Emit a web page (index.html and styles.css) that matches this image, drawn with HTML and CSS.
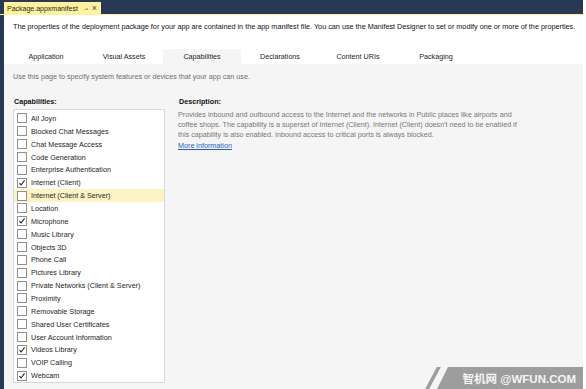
FILE: index.html
```html
<!DOCTYPE html>
<html lang="en">

<head>
    <meta charset="UTF-8">
    <title>Package.appxmanifest</title>
    <link rel="stylesheet" href="styles.css">
</head>

<body>
    <div class="window">
        <div class="titlebar">
            <div class="doc-tab">
                <span>Package.appxmanifest</span>
                <span class="pin">&#8888;</span>
                <span class="close">&#215;</span>
            </div>
        </div>
        <div class="accent"></div>
        <div class="frame">
            <div class="content">
                <p class="intro">The properties of the deployment package for your app are contained in the app manifest file. You can use the Manifest Designer to set or modify one or more of the properties.</p>
                <div class="tabs">
                    <div class="tab">Application</div>
                    <div class="tab">Visual Assets</div>
                    <div class="tab active">Capabilities</div>
                    <div class="tab">Declarations</div>
                    <div class="tab">Content URIs</div>
                    <div class="tab">Packaging</div>
                </div>
                <div class="panel">
                    <p class="hint">Use this page to specify system features or devices that your app can use.</p>
                    <div class="columns">
                        <div class="caps">
                            <h2>Capabilities:</h2>
                            <ul class="list">
                                <li><span class="box"></span>All Joyn</li>
                                <li><span class="box"></span>Blocked Chat Messages</li>
                                <li><span class="box"></span>Chat Message Access</li>
                                <li><span class="box"></span>Code Generation</li>
                                <li><span class="box"></span>Enterprise Authentication</li>
                                <li><span class="box checked"><svg viewBox="0 0 9 9"><path d="M1.6 4.6l1.9 2.1L7.4 1.6" /></svg></span>Internet (Client)</li>
                                <li class="selected"><span class="box"></span>Internet (Client &amp; Server)</li>
                                <li><span class="box"></span>Location</li>
                                <li><span class="box checked"><svg viewBox="0 0 9 9"><path d="M1.6 4.6l1.9 2.1L7.4 1.6" /></svg></span>Microphone</li>
                                <li><span class="box"></span>Music Library</li>
                                <li><span class="box"></span>Objects 3D</li>
                                <li><span class="box"></span>Phone Call</li>
                                <li><span class="box"></span>Pictures Library</li>
                                <li><span class="box"></span>Private Networks (Client &amp; Server)</li>
                                <li><span class="box"></span>Proximity</li>
                                <li><span class="box"></span>Removable Storage</li>
                                <li><span class="box"></span>Shared User Certificates</li>
                                <li><span class="box"></span>User Account Information</li>
                                <li><span class="box checked"><svg viewBox="0 0 9 9"><path d="M1.6 4.6l1.9 2.1L7.4 1.6" /></svg></span>Videos Library</li>
                                <li><span class="box"></span>VOIP Calling</li>
                                <li><span class="box checked"><svg viewBox="0 0 9 9"><path d="M1.6 4.6l1.9 2.1L7.4 1.6" /></svg></span>Webcam</li>
                            </ul>
                        </div>
                        <div class="desc">
                            <h2>Description:</h2>
                            <p>Provides inbound and outbound access to the Internet and the networks in Public places like airports and coffee shops. The capability is a superset of Internet (Client). Internet (Client) doesn't need to be enabled if this capability is also enabled. Inbound access to critical ports is always blocked.</p>
                            <a href="#">More information</a>
                        </div>
                    </div>
                </div>
            </div>
        </div>
    </div>
    <div class="watermark">
        <span class="slash"></span>
        <span class="band">智机网 @WFUN.COM</span>
    </div>
</body>

</html>
```
FILE: styles.css
```css
:root {
  --navy: #293955;
  --tab-yellow: #fff29d;
  --panel: #f5f5f5;
}
body {
  margin: 0;
  padding: 0;
  background: #fff;
  font-family: "Liberation Sans", "Noto Sans CJK SC", sans-serif;
  font-size: 7.2px;
  color: #1e1e1e;
  overflow: hidden;
}
.window {
  width: 583px;
  height: 389px;
  display: flex;
  flex-direction: column;
}
.titlebar {
  height: 14px;
  background: var(--navy);
  display: flex;
  align-items: flex-end;
  padding-left: 4px;
}
.doc-tab {
  height: 12px;
  box-sizing: border-box;
  background: var(--tab-yellow);
  display: flex;
  align-items: center;
  padding: 0 4px 0 3px;
  color: #1e1e1e;
  font-size: 7px;
  white-space: nowrap;
}
.doc-tab .pin {
  margin-left: 5px;
  font-size: 6px;
  color: #555;
}
.doc-tab .close {
  margin-left: 4px;
  font-size: 9px;
  line-height: 9px;
  color: #444;
}
.accent {
  height: 1px;
  background: var(--tab-yellow);
}
.frame {
  flex: 1;
  display: flex;
  border-left: 4px solid var(--navy);
  min-height: 0;
}
.content {
  flex: 1;
  display: flex;
  flex-direction: column;
}
.intro {
  margin: 8px 0 0 9px;
  line-height: 8px;
  font-size: 7.25px;
  color: #111;
  white-space: nowrap;
}
.tabs {
  display: flex;
  margin-top: 18px;
  padding-left: 3px;
}
.tab {
  width: 78px;
  height: 15px;
  display: flex;
  align-items: center;
  justify-content: center;
  color: #1e1e1e;
}
.tab.active {
  background: var(--panel);
}
.panel {
  flex: 1;
  background: var(--panel);
  padding: 9px 0 0 9px;
}
.hint {
  margin: 0;
  color: #6d6d6d;
  line-height: 8px;
}
.columns {
  display: flex;
  gap: 13px;
  margin-top: 16px;
}
.caps {
  width: 152px;
}
h2 {
  margin: 0 0 0 1px;
  font-size: 7.2px;
  font-weight: bold;
  color: #111;
  line-height: 9px;
}
.list {
  list-style: none;
  margin: 3px 0 0;
  padding: 2px 0 0;
  background: #fff;
  border: 1px solid #d5d8de;
}
.list li {
  height: 12.86px;
  display: flex;
  align-items: center;
  gap: 4px;
  padding-left: 3px;
  color: #1e1e1e;
}
.list li.selected {
  background: #fdf4c4;
}
.box {
  width: 8px;
  height: 8px;
  border: 1px solid #8f8f8f;
  background: #fff;
  display: flex;
  flex-shrink: 0;
}
.box svg {
  width: 8px;
  height: 8px;
}
.box svg path {
  fill: none;
  stroke: #222;
  stroke-width: 1.2;
}
.desc {
  flex: 1;
}
.desc p {
  margin: 4px 0 0 0;
  width: 345px;
  color: #777;
  line-height: 10px;
}
.desc a {
  display: inline-block;
  margin-top: 1px;
  color: #1a63c8;
  text-decoration: underline;
}
.watermark {
  position: absolute;
  right: 3px;
  bottom: 0;
  height: 22px;
  display: flex;
  align-items: stretch;
}
.watermark .slash {
  width: 4px;
  background: #9d9d9d;
  transform: skewX(-28deg);
  margin-right: 2px;
}
.watermark .band {
  width: 146px;
  background: #9d9d9d;
  clip-path: polygon(11px 0, 100% 0, 100% 100%, 0 100%);
  color: #f4f4f4;
  font-family: "Liberation Sans", "Noto Sans CJK SC", sans-serif;
  font-weight: bold;
  font-size: 11.5px;
  display: flex;
  align-items: center;
  justify-content: flex-end;
  padding-right: 7px;
  box-sizing: border-box;
}
```
